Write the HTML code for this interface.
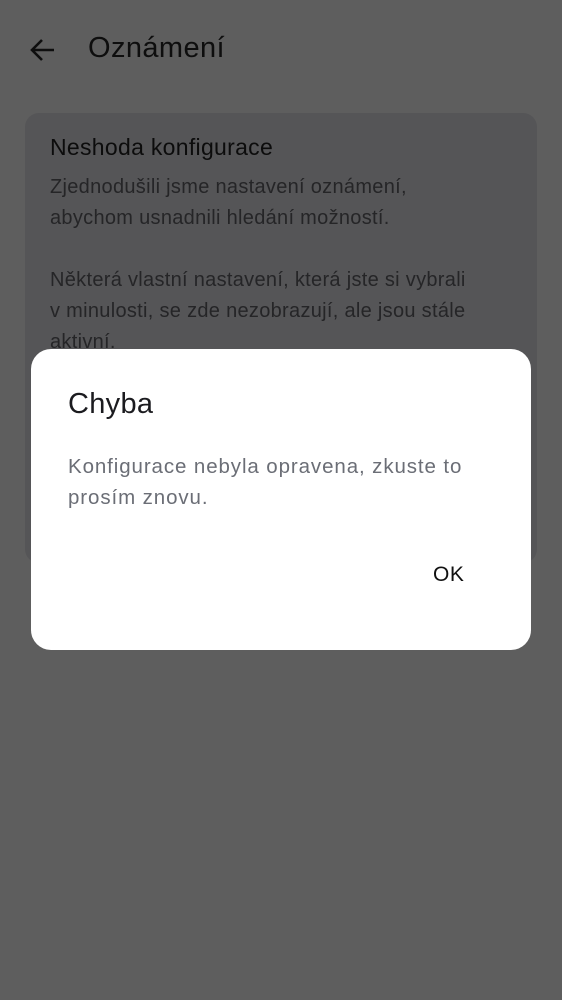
<!DOCTYPE html>
<html><head><meta charset="utf-8"><style>
*{margin:0;padding:0;box-sizing:border-box}
body{width:562px;height:1000px;background:#5e5e5e;font-family:"Liberation Sans",sans-serif;position:relative;overflow:hidden}
div{white-space:nowrap}
.h{position:absolute;left:88px;top:32px;font-size:29px;color:#0e0e0e;letter-spacing:0.4px}
.card{position:absolute;left:25px;top:113px;width:512px;height:450px;background:#555557;border-radius:14px}
.ct{position:absolute;left:50px;top:134px;font-size:23px;color:#0c0c0c;letter-spacing:0.3px}
.cb{position:absolute;left:50px;top:172px;font-size:20px;line-height:31px;color:#252527;letter-spacing:0.3px}
.dlg{position:absolute;left:31px;top:349px;width:500px;height:301px;background:#fff;border-radius:20px}
.dt{position:absolute;left:37px;top:39px;font-size:29px;color:#1b1b1f;letter-spacing:0.3px}
.db{position:absolute;left:37px;top:102px;font-size:20.5px;line-height:31px;color:#6b6e76;letter-spacing:0.9px}
.ok{position:absolute;left:402px;top:214px;font-size:21px;color:#111;letter-spacing:0.5px}
</style></head><body>
<svg style="position:absolute;left:29px;top:37px" width="28" height="26" viewBox="0 0 28 26"><path d="M25 13H4M13 3L3 13l10 10" fill="none" stroke="#0e0e0e" stroke-width="2.6"/></svg>
<div class="h">Oznámení</div>
<div class="card"></div>
<div class="ct">Neshoda konfigurace</div>
<div class="cb">Zjednodušili jsme nastavení oznámení,<br>abychom usnadnili hledání možností.<br><br>Některá vlastní nastavení, která jste si vybrali<br>v minulosti, se zde nezobrazují, ale jsou stále<br>aktivní.</div>
<div class="dlg">
<div class="dt">Chyba</div>
<div class="db">Konfigurace nebyla opravena, zkuste to<br>prosím znovu.</div>
<div class="ok">OK</div>
</div>
</body></html>
